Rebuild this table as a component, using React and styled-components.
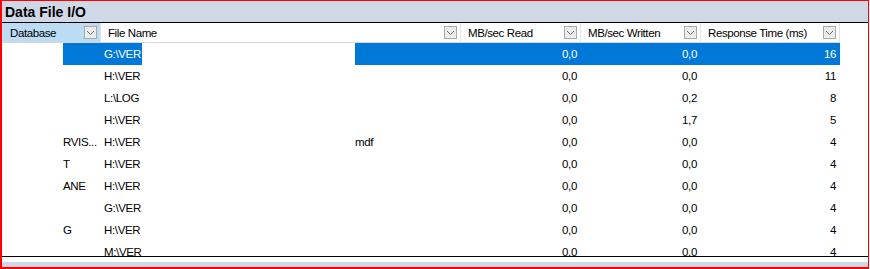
import React from "react";
import styled, { createGlobalStyle } from "styled-components";

const GlobalStyle = createGlobalStyle`
  html, body {
    margin: 0;
    padding: 0;
    background: #ffffff;
  }
  body {
    font-family: "Liberation Sans", Arial, sans-serif;
  }
`;

const COLUMNS = "99px 360px 120px 120px 139px";

const Frame = styled.div`
  box-sizing: border-box;
  width: 869px;
  height: 269px;
  border-style: solid;
  border-color: #ff0000;
  border-width: 1px 1px 2px 2px;
  display: flex;
  flex-direction: column;
  background: #ffffff;
  overflow: hidden;
`;

const TitleBar = styled.div`
  height: 21px;
  background: #d0d7e5;
  border-bottom: 1px solid #000000;
  display: flex;
  align-items: center;
  padding-left: 3px;
  font-size: 14px;
  font-weight: bold;
  color: #000000;
`;

const HeaderRow = styled.div`
  display: grid;
  grid-template-columns: ${COLUMNS};
  width: 838px;
  height: 19px;
  border-bottom: 1px solid #d6d6d6;
`;

const HeaderCell = styled.div`
  display: flex;
  align-items: center;
  justify-content: space-between;
  padding: 0 3px 0 ${(p) => (p.$first ? 8 : 7)}px;
  background: ${(p) => (p.$active ? "#bcdcf4" : "#ffffff")};
  border-right: 1px solid #e5e5e5;
  font-size: 11.5px;
  letter-spacing: -0.4px;
  color: #000000;
  white-space: nowrap;
`;

const FilterBox = styled.span`
  box-sizing: border-box;
  width: 13px;
  height: 13px;
  border: 1px solid #a9a9a9;
  background: #ececec;
  display: flex;
  align-items: center;
  justify-content: center;
`;

const Body = styled.div`
  height: 213px;
  overflow: hidden;
  border-bottom: 1px solid #000000;
`;

const Row = styled.div`
  display: grid;
  grid-template-columns: ${COLUMNS};
  width: 838px;
  height: 22px;
  background: ${(p) => (p.$selected ? "#0078d7" : "#ffffff")};
  color: ${(p) => (p.$selected ? "#ffffff" : "#000000")};
  font-size: 11.5px;
  letter-spacing: -0.35px;
`;

const Cell = styled.div`
  display: flex;
  align-items: center;
  justify-content: ${(p) => (p.$num ? "flex-end" : "flex-start")};
  padding: ${(p) => (p.$num ? "0 4px 0 0" : "0")};
  overflow: hidden;
  white-space: nowrap;
`;

const Mask = styled.span`
  flex: 0 0 ${(p) => p.$w}px;
  align-self: stretch;
  background: #ffffff;
`;

const Drive = styled.span`
  flex: 0 0 38px;
  padding-left: 3px;
  overflow: hidden;
`;

const Footer = styled.div`
  height: 5px;
  margin-top: 5px;
  background: #d0d7e5;
`;

const Chevron = () => (
  <svg width="9" height="6" viewBox="0 0 9 6">
    <polyline points="1,1 4.5,4.5 8,1" fill="none" stroke="#6b6b6b" strokeWidth="1" />
  </svg>
);

const headers = [
  "Database",
  "File Name",
  "MB/sec Read",
  "MB/sec Written",
  "Response Time (ms)",
];

const rows = [
  { db: "", drive: "G:\\VER", ext: "", read: "0,0", written: "0,0", resp: "16", selected: true },
  { db: "", drive: "H:\\VER", ext: "", read: "0,0", written: "0,0", resp: "11" },
  { db: "", drive: "L:\\LOG", ext: "", read: "0,0", written: "0,2", resp: "8" },
  { db: "", drive: "H:\\VER", ext: "", read: "0,0", written: "1,7", resp: "5" },
  { db: "RVIS...", drive: "H:\\VER", ext: "mdf", read: "0,0", written: "0,0", resp: "4" },
  { db: "T", drive: "H:\\VER", ext: "", read: "0,0", written: "0,0", resp: "4" },
  { db: "ANE", drive: "H:\\VER", ext: "", read: "0,0", written: "0,0", resp: "4" },
  { db: "", drive: "G:\\VER", ext: "", read: "0,0", written: "0,0", resp: "4" },
  { db: "G", drive: "H:\\VER", ext: "", read: "0,0", written: "0,0", resp: "4" },
  { db: "", drive: "M:\\VER", ext: "", read: "0,0", written: "0,0", resp: "4" },
];

const App = () => {
  return (
    <>
      <GlobalStyle />
      <Frame>
        <TitleBar>Data File I/O</TitleBar>
        <HeaderRow>
          {headers.map((h, i) => (
            <HeaderCell key={h} $first={i === 0} $active={i === 0}>
              <span>{h}</span>
              <FilterBox>
                <Chevron />
              </FilterBox>
            </HeaderCell>
          ))}
        </HeaderRow>
        <Body>
          {rows.map((r, i) => (
            <Row key={i} $selected={r.selected}>
              <Cell>
                <Mask $w={61} />
                <span>{r.db}</span>
              </Cell>
              <Cell>
                <Drive>{r.drive}</Drive>
                <Mask $w={213} />
                <span>{r.ext}</span>
              </Cell>
              <Cell $num>{r.read}</Cell>
              <Cell $num>{r.written}</Cell>
              <Cell $num>{r.resp}</Cell>
            </Row>
          ))}
        </Body>
        <Footer />
      </Frame>
    </>
  );
};

export default App;
